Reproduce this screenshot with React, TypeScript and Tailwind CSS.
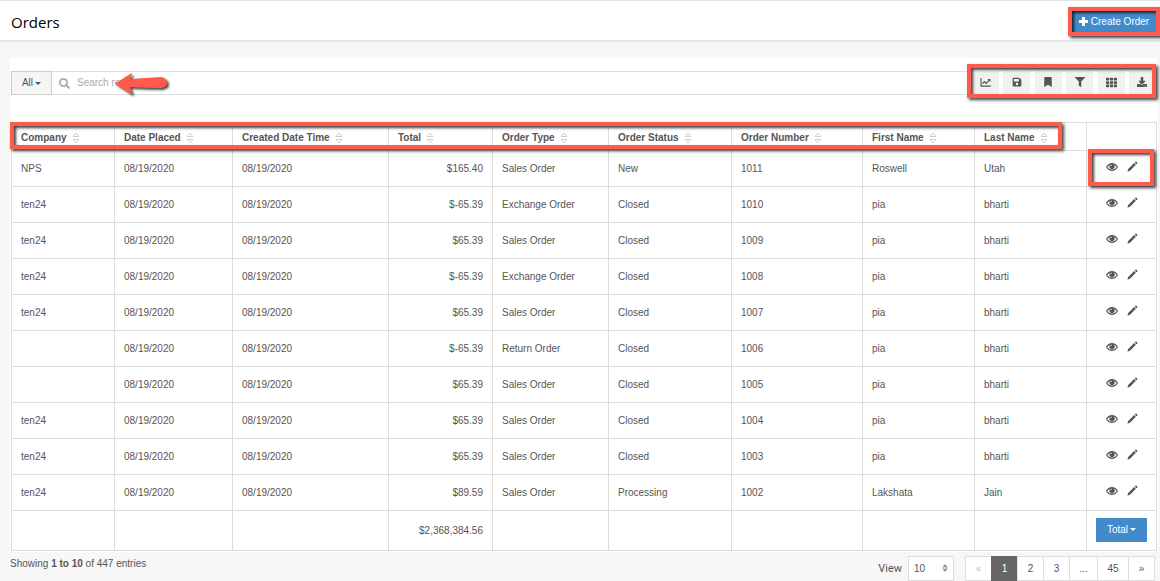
import type { ReactNode } from 'react';
import { FaBookmark, FaDownload, FaFilter, FaSave, FaSearch, FaTh } from 'react-icons/fa';

type Order = {
  company: string;
  total: string;
  type: string;
  status: string;
  number: string;
  first: string;
  last: string;
};

const DATE = '08/19/2020';

const columns = [
  { label: 'Company', width: 'w-[103px]' },
  { label: 'Date Placed', width: 'w-[118px]' },
  { label: 'Created Date Time', width: 'w-[156px]' },
  { label: 'Total', width: 'w-[104px]' },
  { label: 'Order Type', width: 'w-[116px]' },
  { label: 'Order Status', width: 'w-[123px]' },
  { label: 'Order Number', width: 'w-[131px]' },
  { label: 'First Name', width: 'w-[112px]' },
  { label: 'Last Name', width: 'w-[112px]' },
];

const sale = (number: string, company = 'ten24'): Order => ({
  company, total: '$65.39', type: 'Sales Order', status: 'Closed', number, first: 'pia', last: 'bharti',
});

const orders: Order[] = [
  { company: 'NPS', total: '$165.40', type: 'Sales Order', status: 'New', number: '1011', first: 'Roswell', last: 'Utah' },
  { ...sale('1010'), total: '$-65.39', type: 'Exchange Order' },
  sale('1009'),
  { ...sale('1008'), total: '$-65.39', type: 'Exchange Order' },
  sale('1007'),
  { ...sale('1006', ''), total: '$-65.39', type: 'Return Order' },
  sale('1005', ''),
  sale('1004'),
  sale('1003'),
  { company: 'ten24', total: '$89.59', type: 'Sales Order', status: 'Processing', number: '1002', first: 'Lakshata', last: 'Jain' },
];

const cell = 'border border-[#dddddd] px-[9px]';

function Highlight({ className }: { className: string }) {
  return (
    <div
      aria-hidden="true"
      className={`pointer-events-none absolute z-10 border-4 border-[#ff5a4b] shadow-[2px_2px_3px_rgba(0,0,0,0.75),inset_2px_2px_3px_rgba(0,0,0,0.75)] ${className}`}
    />
  );
}

function Caret() {
  return <span className="inline-block border-x-3 border-t-3 border-x-transparent border-t-current" />;
}

function PlusIcon() {
  return (
    <svg viewBox="0 0 9 9" className="size-[9px]" fill="currentColor">
      <path d="M3 0h3v3h3v3H6v3H3V6H0V3h3z" />
    </svg>
  );
}

function ChartIcon() {
  return (
    <svg viewBox="0 0 12 10" className="h-[9px] w-[11px]" fill="none" stroke="currentColor">
      <path d="M1 0v9h11" strokeWidth="1.2" />
      <path d="M2.6 6.2 4.8 4l2 2 3.2-3.3" strokeWidth="1.4" />
      <path d="M8 1h3.5v3.4z" fill="currentColor" stroke="none" />
    </svg>
  );
}

function SortIcon() {
  return (
    <svg viewBox="0 0 8 12" className="h-3 w-2 shrink-0" fill="none" stroke="#cfcfcf" strokeWidth="1">
      <path d="M1 4.5h6L4 1zM1 7.5h6L4 11z" />
    </svg>
  );
}

function EyeIcon() {
  return (
    <svg viewBox="0 0 12 8" className="h-2 w-3" fill="none" stroke="currentColor">
      <path d="M.6 4C2 1.7 3.8.6 6 .6S10 1.7 11.4 4C10 6.300 8.200 7.400 6 7.400S2 6.300.6 4z" strokeWidth="1.1" />
      <circle cx="6" cy="3.500" r="2.700" fill="currentColor" stroke="none" />
      <path d="M4.600 3.400A1.300 1.300 0 0 1 5.900 2.100" stroke="#fff" strokeWidth=".7" />
    </svg>
  );
}

function PencilIcon() {
  return (
    <svg viewBox="0 0 12 12" className="size-[11px]" fill="currentColor">
      <path d="M.4 11.600 1.300 8.700 7.800 2.200l1.900 1.900-6.500 6.500zM8.400 1.600 9.300.7c.3-.3.8-.3 1.100 0l.8.8c.3.300.3.800 0 1.100l-.9.900z" />
    </svg>
  );
}

function Arrow() {
  return (
    <svg
      aria-hidden="true"
      viewBox="0 0 56 28"
      className="pointer-events-none absolute -top-px left-[103px] h-7 w-14 drop-shadow-[2px_2px_1px_rgba(0,0,0,0.7)]"
    >
      <path d="M1 13.500 17 3.500q1-.5 1 .5l-2 5q15-1 31-2 6 1 6 5.500T47 18q-15 0-31-1l2 6q0 1.500-1 1z" fill="#ff5a4b" />
    </svg>
  );
}

const tools: { label: string; icon: ReactNode }[] = [
  { label: 'Reports', icon: <ChartIcon /> },
  { label: 'Save', icon: <FaSave size={10} /> },
  { label: 'Bookmarks', icon: <FaBookmark size={10} /> },
  { label: 'Filter', icon: <FaFilter size={10} /> },
  { label: 'Columns', icon: <FaTh size={11} /> },
  { label: 'Download', icon: <FaDownload size={10} /> },
];

const pages = [
  { label: '«', style: 'w-[27px] text-[#bbbbbb]' },
  { label: '1', style: 'w-[27px] border-[#666666] bg-[#666666] text-white' },
  { label: '2', style: 'w-[27px]' },
  { label: '3', style: 'w-[27px]' },
  { label: '...', style: 'w-[29px]' },
  { label: '45', style: 'w-8' },
  { label: '»', style: 'w-[27px]' },
];

export default function App() {
  return (
    <div className="min-h-screen overflow-x-hidden bg-[#f7f7f7] font-['Liberation_Sans',Arial,sans-serif] text-[10px] leading-4 text-[#555555]">
      <header className="flex h-[42px] items-center justify-between border-t border-b-2 border-t-[#e5e5e5] border-b-[#e4e7ea] bg-white pl-[11px]">
        <h1 className="pt-0.5 font-['Open_Sans','Noto_Sans',sans-serif] text-[15px] leading-5 text-black">Orders</h1>
        <div className="relative mt-0.5 p-1">
          <button type="button" className="flex h-[21px] w-[84px] items-center justify-center gap-[3px] bg-[#428bca] text-white">
            <PlusIcon />
            Create Order
          </button>
          <Highlight className="inset-0" />
        </div>
      </header>

      <main className="mt-4 mr-0.5 ml-[10px]">
        <section className="rounded-t bg-white pt-[13px] pr-px pb-px pl-px">
          <div className="relative flex h-6">
            <button type="button" className="flex w-[41px] shrink-0 items-center justify-center gap-0.5 border border-[#cccccc] bg-[#f5f5f5]">
              All
              <Caret />
            </button>
            <label className="flex min-w-0 flex-1 items-center gap-[7px] border-y border-[#dddddd] pl-[7px] text-[#aaaaaa]">
              <FaSearch size={11} />
              <input
                aria-label="Search"
                placeholder="Search re"
                className="min-w-0 flex-1 bg-transparent outline-none placeholder:text-[#aaaaaa]"
              />
            </label>
            <Arrow />
            <div className="relative flex w-[188px] shrink-0 justify-between bg-white pr-px pl-[3px]">
              {tools.map((tool) => (
                <button
                  key={tool.label}
                  type="button"
                  aria-label={tool.label}
                  className="flex w-[27px] items-center justify-center bg-[#f1f1f1] pb-0.5"
                >
                  {tool.icon}
                </button>
              ))}
              <Highlight className="-top-[7px] right-px -bottom-[3px] -left-0.5" />
            </div>
          </div>

          <div className="relative mt-[27px]">
            <table className="w-full table-fixed border-collapse">
              <thead>
                <tr className="h-7">
                  {columns.map((column) => (
                    <th key={column.label} scope="col" className={`${cell} ${column.width} pt-0.5 text-left`}>
                      <span className="flex items-center gap-[5px] whitespace-nowrap">
                        {column.label}
                        <SortIcon />
                      </span>
                    </th>
                  ))}
                  <th scope="col" aria-label="Actions" className={`${cell} w-[70px]`} />
                </tr>
              </thead>
              <tbody>
                {orders.map((order, index) => (
                  <tr key={order.number} className="h-9">
                    <td className={cell}>{order.company}</td>
                    <td className={cell}>{DATE}</td>
                    <td className={cell}>{DATE}</td>
                    <td className={`${cell} text-right`}>{order.total}</td>
                    <td className={cell}>{order.type}</td>
                    <td className={cell}>{order.status}</td>
                    <td className={cell}>{order.number}</td>
                    <td className={cell}>{order.first}</td>
                    <td className={cell}>{order.last}</td>
                    <td className="relative border border-[#dddddd]">
                      <div className="flex items-center justify-center gap-[9px] pb-1">
                        <a href="#view" aria-label={`View order ${order.number}`}>
                          <EyeIcon />
                        </a>
                        <a href="#edit" aria-label={`Edit order ${order.number}`}>
                          <PencilIcon />
                        </a>
                      </div>
                      {index === 0 && <Highlight className="-top-0.5 right-0.5 bottom-0 left-px" />}
                    </td>
                  </tr>
                ))}
                <tr className="h-10">
                  <td className={cell} />
                  <td className={cell} />
                  <td className={cell} />
                  <td className={`${cell} text-right`}>$2,368,384.56</td>
                  <td className={cell} />
                  <td className={cell} />
                  <td className={cell} />
                  <td className={cell} />
                  <td className={cell} />
                  <td className={`${cell} pb-0.5`}>
                    <button type="button" className="flex h-6 w-full items-center justify-center gap-0.5 rounded-[1px] bg-[#428bca] text-white">
                      Total
                      <Caret />
                    </button>
                  </td>
                </tr>
              </tbody>
            </table>
            <Highlight className="top-0 right-[95px] -left-px h-[27px]" />
          </div>
        </section>

        <footer className="flex items-start justify-between pt-1 pr-[3px]">
          <p>
            Showing <b>1 to 10</b> of 447 entries
          </p>
          <div className="flex items-center">
            <label htmlFor="page-size" className="mr-[6px] font-['Roboto',sans-serif] text-[11px]">View</label>
            <div className="relative mr-[11px]">
              <select id="page-size" className="h-[25px] w-[46px] appearance-none border border-[#dddddd] bg-white pl-[5px]">
                <option>10</option>
              </select>
              <svg viewBox="0 0 6 8" className="pointer-events-none absolute top-2 right-[6px] h-2 w-[6px]" fill="#999999">
                <path d="M0 3.400 3 0l3 3.400zM0 4.600 3 8l3-3.400z" />
              </svg>
            </div>
            <nav aria-label="Pagination" className="flex h-[25px] pl-px">
              {pages.map((page) => (
                <a
                  key={page.label}
                  href="#page"
                  className={`-ml-px flex items-center justify-center border ${page.label === '1' ? '' : 'border-[#dddddd] bg-white'} ${page.style}`}
                >
                  {page.label}
                </a>
              ))}
            </nav>
          </div>
        </footer>
      </main>
    </div>
  );
}
